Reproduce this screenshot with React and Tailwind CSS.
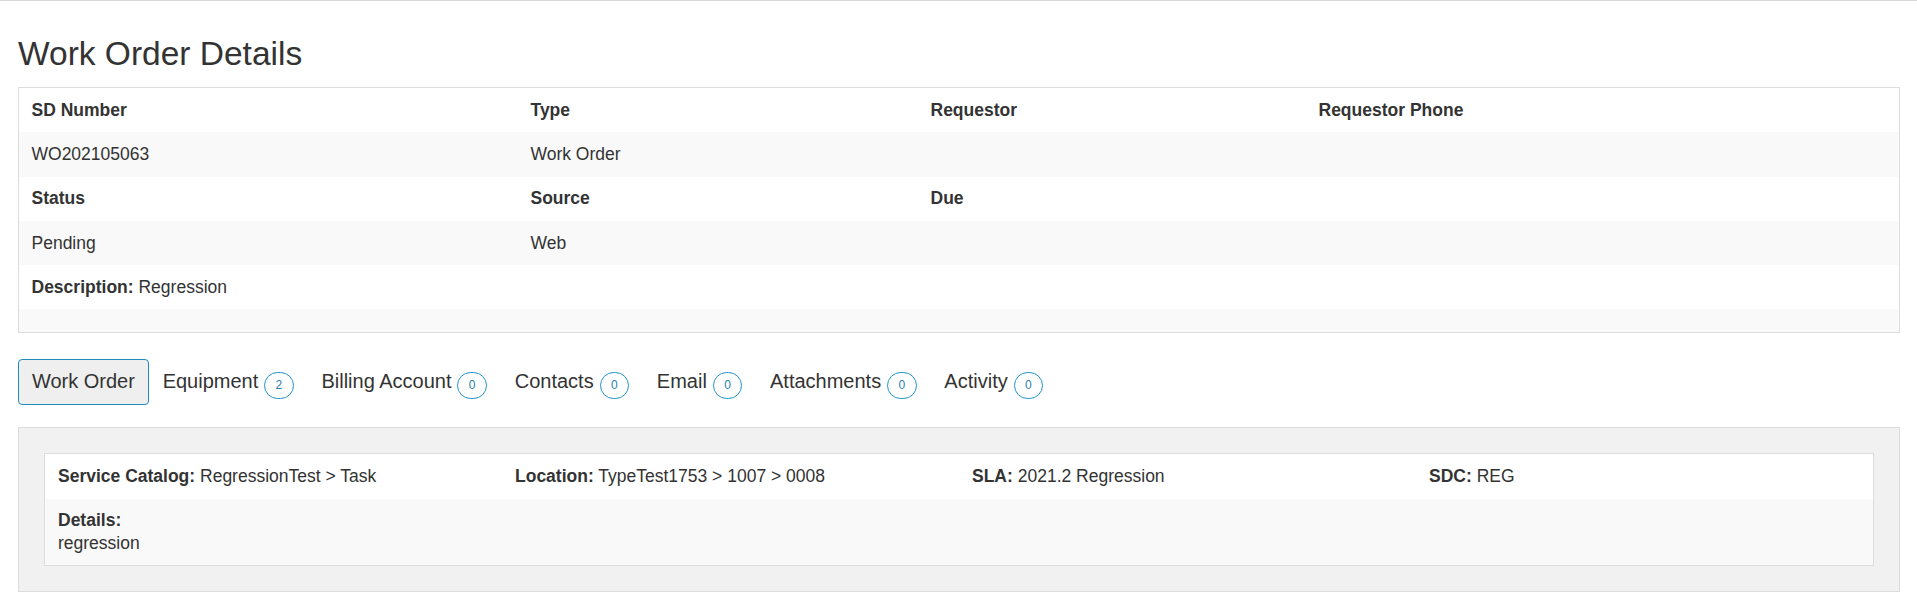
import React from 'react';

const topRows = [
    { cells: ['SD Number', 'Type', 'Requestor', 'Requestor Phone'], head: true },
    { cells: ['WO202105063', 'Work Order', '', ''], striped: true },
    { cells: ['Status', 'Source', 'Due', ''], head: true },
    { cells: ['Pending', 'Web', '', ''], striped: true },
];

const tabs = [
    { label: 'Work Order', active: true },
    { label: 'Equipment', count: 2 },
    { label: 'Billing Account', count: 0 },
    { label: 'Contacts', count: 0 },
    { label: 'Email', count: 0 },
    { label: 'Attachments', count: 0 },
    { label: 'Activity', count: 0 },
];

const meta = [
    { label: 'Service Catalog:', value: 'RegressionTest > Task' },
    { label: 'Location:', value: 'TypeTest1753 > 1007 > 0008' },
    { label: 'SLA:', value: '2021.2 Regression' },
    { label: 'SDC:', value: 'REG' },
];

const Badge = ({ n }) => (
    <span className="mt-[7px] flex h-[27px] w-[29.5px] items-center justify-center rounded-full border border-[#1f94c8] bg-white text-[12px] leading-none text-[#2b7fae]">
        {n}
    </span>
);

export default function App() {
    return (
        <div className="min-h-screen border-t border-[#d9d9d9] bg-white pl-[18px] pr-[17px] font-['Liberation_Sans',Arial,sans-serif] text-[17.5px] text-[#333]">
            <h1 className="pt-[34px] text-[33.5px] font-normal leading-[37px]">Work Order Details</h1>

            {/* Summary table */}
            <div className="mt-[15px] border border-[#ddd]">
                {topRows.map((row, i) => (
                    <div
                        key={i}
                        className={`grid h-[44.3px] grid-cols-[499px_400px_388px_1fr] items-center leading-[25px] ${row.striped ? 'bg-[#f9f9f9]' : 'bg-white'} ${row.head ? 'font-bold' : ''}`}
                    >
                        {row.cells.map((c, j) => (
                            <div key={j} className="px-[12.5px]">{c}</div>
                        ))}
                    </div>
                ))}
                <div className="flex h-[44.3px] items-center px-[12.5px] leading-[25px]">
                    <span className="font-bold">Description:</span>&nbsp;Regression
                </div>
                <div className="h-[22.5px] bg-[#f9f9f9]" />
            </div>

            {/* Tabs */}
            <div className="mt-[26px] flex text-[20px] leading-[25px]">
                {tabs.map((t) => (
                    <div
                        key={t.label}
                        className={`flex h-[45.7px] items-center gap-[5.9px] rounded-[4px] border px-[12.9px] ${t.active ? 'border-[#1f8cc0] bg-[#efefef]' : 'border-transparent'}`}
                    >
                        <span>{t.label}</span>
                        {t.count !== undefined && <Badge n={t.count} />}
                    </div>
                ))}
            </div>

            {/* Work order panel */}
            <div className="mt-[22px] border border-[#ddd] bg-[#f1f1f1] p-[25px]">
                <div className="border border-[#ddd] bg-white">
                    <div className="grid h-[45px] grid-cols-4 items-center leading-[25px]">
                        {meta.map((m) => (
                            <div key={m.label} className="px-[13px]">
                                <span className="font-bold">{m.label}</span> {m.value}
                            </div>
                        ))}
                    </div>
                    <div className="bg-[#f9f9f9] px-[13px] py-[10px] leading-[23px]">
                        <div className="font-bold">Details:</div>
                        <div>regression</div>
                    </div>
                </div>
            </div>
        </div>
    );
}
